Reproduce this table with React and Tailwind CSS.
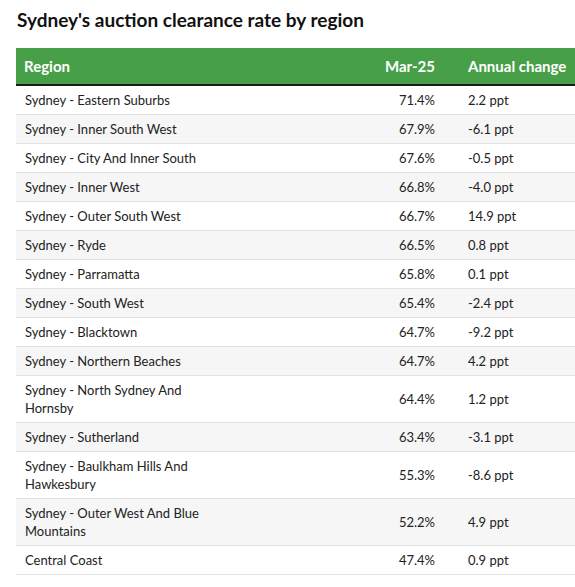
import React from 'react';

const rows = [
    ['Sydney - Eastern Suburbs', '71.4%', '2.2 ppt'],
    ['Sydney - Inner South West', '67.9%', '-6.1 ppt'],
    ['Sydney - City And Inner South', '67.6%', '-0.5 ppt'],
    ['Sydney - Inner West', '66.8%', '-4.0 ppt'],
    ['Sydney - Outer South West', '66.7%', '14.9 ppt'],
    ['Sydney - Ryde', '66.5%', '0.8 ppt'],
    ['Sydney - Parramatta', '65.8%', '0.1 ppt'],
    ['Sydney - South West', '65.4%', '-2.4 ppt'],
    ['Sydney - Blacktown', '64.7%', '-9.2 ppt'],
    ['Sydney - Northern Beaches', '64.7%', '4.2 ppt'],
    ['Sydney - North Sydney And Hornsby', '64.4%', '1.2 ppt'],
    ['Sydney - Sutherland', '63.4%', '-3.1 ppt'],
    ['Sydney - Baulkham Hills And Hawkesbury', '55.3%', '-8.6 ppt'],
    ['Sydney - Outer West And Blue Mountains', '52.2%', '4.9 ppt'],
    ['Central Coast', '47.4%', '0.9 ppt'],
];

const App = () => {
    return (
        <div className="w-[575px] h-[587px] overflow-hidden bg-white text-[#222] font-['Lato',sans-serif]">
            <h2 className="pl-[17px] pt-[9px] h-[48px] text-[19px] font-bold text-[#111] leading-[22px]">
                Sydney's auction clearance rate by region
            </h2>

            <div className="ml-4 w-[580px]">
                {/* header */}
                <div className="grid grid-cols-[234px_185px_1fr] h-[38px] items-center bg-[#479f47] border-b-2 border-[#1c1c1c] text-white font-bold text-[15px]">
                    <div className="pl-2">Region</div>
                    <div className="text-right">Mar-25</div>
                    <div className="pl-[33px]">Annual change</div>
                </div>

                {rows.map(([region, rate, change], i) => (
                    <div
                        key={region}
                        className={`grid grid-cols-[234px_185px_1fr] items-center border-b border-[#e2e2e2] py-[5px] min-h-[29px] text-[13px] leading-[18px] ${i % 2 === 1 ? 'bg-[#f6f6f6]' : 'bg-white'}`}
                    >
                        <div className="pl-[9px] pr-6">{region}</div>
                        <div className="text-right">{rate}</div>
                        <div className="pl-[33px]">{change}</div>
                    </div>
                ))}
            </div>
        </div>
    );
};

export default App;
